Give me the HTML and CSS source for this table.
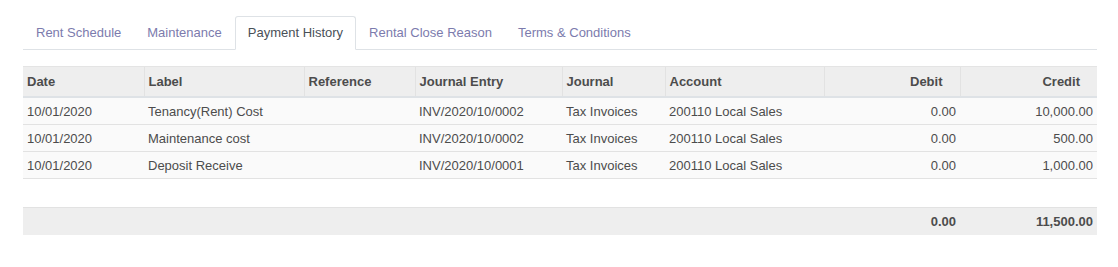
FILE: index.html
```html
<!DOCTYPE html>
<html>
<head>
<meta charset="utf-8">
<link rel="stylesheet" href="styles.css">
</head>
<body>
<div class="notebook">
  <ul class="tabs">
    <li class="tab"><span class="tab-link">Rent Schedule</span></li>
    <li class="tab"><span class="tab-link">Maintenance</span></li>
    <li class="tab active"><span class="tab-link">Payment History</span></li>
    <li class="tab"><span class="tab-link">Rental Close Reason</span></li>
    <li class="tab"><span class="tab-link">Terms &amp; Conditions</span></li>
  </ul>
  <table class="list">
    <colgroup>
      <col class="c-date"><col class="c-label"><col class="c-ref"><col class="c-entry"><col class="c-journal"><col class="c-account"><col class="c-debit"><col class="c-credit">
    </colgroup>
    <thead>
      <tr>
        <th>Date</th>
        <th>Label</th>
        <th>Reference</th>
        <th>Journal Entry</th>
        <th>Journal</th>
        <th>Account</th>
        <th class="num">Debit</th>
        <th class="num">Credit</th>
      </tr>
    </thead>
    <tbody>
      <tr class="data">
        <td>10/01/2020</td><td>Tenancy(Rent) Cost</td><td></td><td>INV/2020/10/0002</td><td>Tax Invoices</td><td>200110 Local Sales</td><td class="num">0.00</td><td class="num">10,000.00</td>
      </tr>
      <tr class="data">
        <td>10/01/2020</td><td>Maintenance cost</td><td></td><td>INV/2020/10/0002</td><td>Tax Invoices</td><td>200110 Local Sales</td><td class="num">0.00</td><td class="num">500.00</td>
      </tr>
      <tr class="data">
        <td>10/01/2020</td><td>Deposit Receive</td><td></td><td>INV/2020/10/0001</td><td>Tax Invoices</td><td>200110 Local Sales</td><td class="num">0.00</td><td class="num">1,000.00</td>
      </tr>
      <tr class="spacer">
        <td colspan="8"></td>
      </tr>
    </tbody>
    <tfoot>
      <tr>
        <td></td><td></td><td></td><td></td><td></td><td></td><td class="num">0.00</td><td class="num">11,500.00</td>
      </tr>
    </tfoot>
  </table>
</div>
</body>
</html>
```

FILE: styles.css
```css
html, body {
  margin: 0;
  padding: 0;
  background: #ffffff;
}

body {
  font-family: "Liberation Sans", Arial, sans-serif;
  font-size: 13px;
  color: #4c4c4c;
}

.notebook {
  padding: 16px 21px 0 23px;
}

.tabs {
  display: flex;
  list-style: none;
  margin: 0;
  padding: 0;
  border-bottom: 1px solid #dee2e6;
}

.tab {
  margin-bottom: -1px;
}

.tab-link {
  display: block;
  padding: 6px 12px;
  line-height: 20px;
  border: 1px solid transparent;
  border-radius: 3px 3px 0 0;
  color: #7c7bad;
}

.tab.active .tab-link {
  color: #495057;
  background: #ffffff;
  border-color: #dee2e6 #dee2e6 #ffffff;
}

.list {
  margin-top: 16px;
  width: 100%;
  table-layout: fixed;
  border-collapse: collapse;
}

.c-date { width: 121px; }
.c-label { width: 160px; }
.c-ref { width: 111px; }
.c-entry { width: 147px; }
.c-journal { width: 103px; }
.c-account { width: 159px; }
.c-debit { width: 136px; }
.c-credit { width: 137px; }

.list th {
  height: 29px;
  padding: 0 4px;
  text-align: left;
  font-weight: bold;
  background: #eeeeee;
  border-top: 1px solid #e4e4e4;
  border-bottom: 2px solid #dee2e6;
  border-left: 1px solid #e2e2e2;
  white-space: nowrap;
}

.list th:first-child {
  border-left: none;
}

.list th.num {
  text-align: right;
  padding-right: 17px;
}

.list td {
  padding: 0 4px;
  white-space: nowrap;
}

.list .data td {
  height: 26px;
  background: #fafafa;
  border-bottom: 1px solid #e2e2e2;
}

.list td.num {
  text-align: right;
}

.list .spacer td {
  height: 28px;
  background: #ffffff;
}

.list tfoot td {
  height: 27px;
  background: #eeeeee;
  border-top: 1px solid #e2e2e2;
  font-weight: bold;
}
```
